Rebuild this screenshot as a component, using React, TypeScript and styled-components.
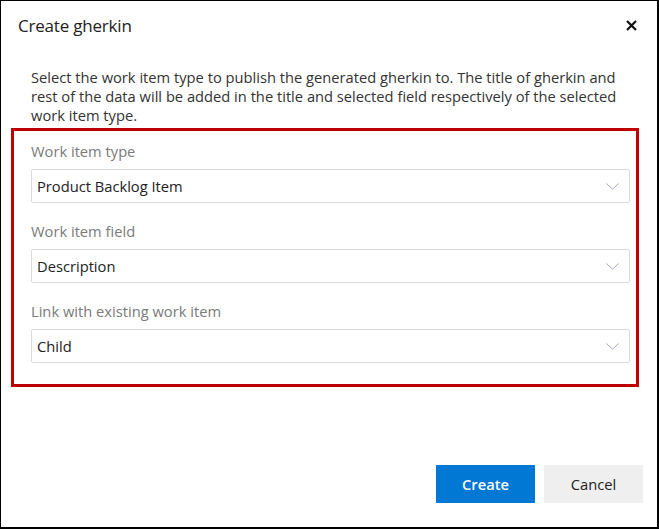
import React from 'react';
import styled, { createGlobalStyle } from 'styled-components';

const GlobalStyle = createGlobalStyle`
  html, body {
    margin: 0;
    padding: 0;
    background: #ffffff;
  }
  * {
    box-sizing: border-box;
  }
`;

const font = `"Open Sans", "Noto Sans", "Liberation Sans", sans-serif`;

const Dialog = styled.div`
  width: 659px;
  height: 529px;
  display: flex;
  flex-direction: column;
  background: #ffffff;
  border-style: solid;
  border-color: #000000;
  border-width: 1px 2px 2px 1px;
  font-family: ${font};
  color: #222222;
`;

const Header = styled.div`
  display: flex;
  align-items: center;
  justify-content: space-between;
  padding: 12px 20px 0 17px;
  height: 37px;
`;

const Title = styled.h1`
  margin: 0;
  font-size: 17px;
  line-height: 24px;
  font-weight: 400;
  color: #222222;
  letter-spacing: -0.2px;
`;

const CloseButton = styled.button`
  border: none;
  background: transparent;
  padding: 0;
  width: 12px;
  height: 12px;
  display: flex;
  align-items: center;
  justify-content: center;
  cursor: pointer;
`;

const Body = styled.div`
  padding: 0 27px 0 30px;
`;

const Description = styled.p`
  margin: 30px -8px 0 0;
  font-size: 14.7px;
  line-height: 19px;
  color: #333333;
`;

const Highlight = styled.div`
  margin: 3px -9px 0 -20px;
  border: 3px solid #c00000;
  padding: 10px 6px 21px 17px;
`;

const Field = styled.div`
  & + & {
    margin-top: 18px;
  }
`;

const Label = styled.div`
  font-size: 14.7px;
  line-height: 20px;
  color: #7a7a7a;
  margin-bottom: 8px;
`;

const Select = styled.div`
  height: 34px;
  border: 1px solid #dadada;
  border-radius: 2px;
  display: flex;
  align-items: center;
  justify-content: space-between;
  padding: 0 10px 0 5px;
  font-size: 14.7px;
  color: #222222;
  background: #ffffff;
`;

const Footer = styled.div`
  margin-top: auto;
  display: flex;
  justify-content: flex-end;
  gap: 9px;
  padding: 0 14px 24px 0;
`;

const Button = styled.button<{ $primary?: boolean }>`
  width: 99px;
  height: 38px;
  border: none;
  border-radius: 0;
  font-family: ${font};
  font-size: 14.7px;
  font-weight: ${p => (p.$primary ? 600 : 400)};
  color: ${p => (p.$primary ? '#ffffff' : '#222222')};
  background: ${p => (p.$primary ? '#0078d4' : '#efefef')};
  cursor: pointer;
`;

const Chevron = () => (
  <svg width="13" height="7" viewBox="0 0 13 7" fill="none">
    <path d="M0.5 0.5 L6.5 6.2 L12.5 0.5" stroke="#a3a6b4" strokeWidth="1" />
  </svg>
);

const CloseIcon = () => (
  <svg width="11" height="11" viewBox="0 0 11 11">
    <path d="M1 1 L10 10 M10 1 L1 10" stroke="#111111" strokeWidth="2.2" />
  </svg>
);

const fields = [
  { label: 'Work item type', value: 'Product Backlog Item' },
  { label: 'Work item field', value: 'Description' },
  { label: 'Link with existing work item', value: 'Child' },
];

export default function App() {
  return (
    <>
      <GlobalStyle />
      <Dialog>
        <Header>
          <Title>Create gherkin</Title>
          <CloseButton aria-label="Close">
            <CloseIcon />
          </CloseButton>
        </Header>
        <Body>
          <Description>
            Select the work item type to publish the generated gherkin to. The title of gherkin and rest of the
            data will be added in the title and selected field respectively of the selected work item type.
          </Description>
          <Highlight>
            {fields.map(f => (
              <Field key={f.label}>
                <Label>{f.label}</Label>
                <Select>
                  <span>{f.value}</span>
                  <Chevron />
                </Select>
              </Field>
            ))}
          </Highlight>
        </Body>
        <Footer>
          <Button $primary>Create</Button>
          <Button>Cancel</Button>
        </Footer>
      </Dialog>
    </>
  );
}
